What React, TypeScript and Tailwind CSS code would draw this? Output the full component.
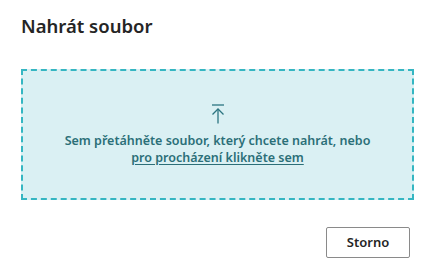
import React from "react";

// ── Upload arrow (bar + arrow up) ─────────────────────────────────────────────

function UploadIcon() {
  return (
    <svg width="14" height="20" viewBox="0 0 14 20" fill="none" stroke="#2b7480" strokeWidth="1.3">
      <path d="M1 1h12" />
      <path d="M7 5v14.5" />
      <path d="M1.5 10.5L7 5l5.5 5.5" />
    </svg>
  );
}

// ── Component ─────────────────────────────────────────────────────────────────

export default function App() {
  return (
    <div
      className="w-[426px] h-[276px] bg-white flex flex-col pl-[21px] pr-[12px] pt-[13px]"
      style={{ fontFamily: '"Noto Sans", "Open Sans", sans-serif' }}
    >
      <h1 className="text-[18.5px] font-semibold text-[#252525] leading-[26px]">Nahrát soubor</h1>

      {/* Drop zone */}
      <div className="mt-[30px] h-[131px] w-[393px] border-2 border-dashed border-[#35b6c2] bg-[#daf0f3] flex flex-col items-center pt-[33px]">
        <UploadIcon />
        <p className="mt-[8px] text-[12.5px] font-semibold text-[#2b6f78] leading-[17px] text-center">
          Sem přetáhněte soubor, který chcete nahrát, nebo
          <br />
          <span className="underline underline-offset-2 cursor-pointer">pro procházení klikněte sem</span>
        </p>
      </div>

      <div className="flex justify-end mt-[27px] pr-[4px]">
        <button className="w-[84px] h-[31px] border border-[#8a8a8a] rounded-[2px] bg-white text-[13px] font-semibold text-[#252525]">
          Storno
        </button>
      </div>
    </div>
  );
}
